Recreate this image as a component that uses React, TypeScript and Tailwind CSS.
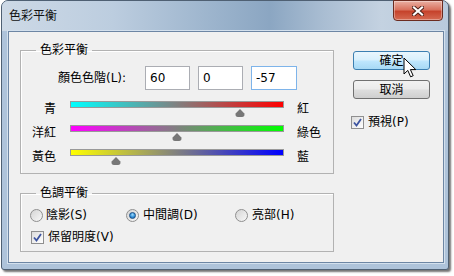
import React from "react";

type SliderRow = { left: string; right: string; value: number; bar: string };

const sliders: SliderRow[] = [
  { left: "青", right: "紅", value: 60, bar: "bg-[linear-gradient(90deg,#00ffff,#808080_50%,#ff0000)]" },
  { left: "洋紅", right: "綠色", value: 0, bar: "bg-[linear-gradient(90deg,#ff00ff,#808080_50%,#00ff00)]" },
  { left: "黃色", right: "藍", value: -57, bar: "bg-[linear-gradient(90deg,#ffff00,#808080_50%,#0000ff)]" },
];

function Thumb({ value }: { value: number }) {
  const x = ((value + 100) / 200) * 213;
  return (
    <svg
      className="absolute top-[10px]"
      style={{ left: x - 5 }}
      width="10"
      height="8"
      viewBox="0 0 10 8"
    >
      <path d="M5 0 L9.4 4.6 Q10 8 7 8 L3 8 Q0 8 0.6 4.6 Z" fill="#777777" />
    </svg>
  );
}

function CheckBox() {
  return (
    <span className="flex h-[13px] w-[13px] items-center justify-center border border-[#8f8f8f] bg-[linear-gradient(135deg,#dcdcdc,#ffffff)]">
      <svg width="9" height="9" viewBox="0 0 9 9">
        <path d="M1 4.5 L3.5 7.5 L8 1" fill="none" stroke="#3d54a0" strokeWidth="1.8" />
      </svg>
    </span>
  );
}

function Radio({ checked }: { checked?: boolean }) {
  return (
    <span className="flex h-[13px] w-[13px] items-center justify-center rounded-full border border-[#8f8f8f] bg-[linear-gradient(135deg,#d4d4d4,#f8f8f8)]">
      {checked && (
        <span className="h-[7px] w-[7px] rounded-full border border-[#1b4f86] bg-[radial-gradient(circle_at_50%_35%,#9fdcff,#2a8ad4_60%,#1b5fa5)]" />
      )}
    </span>
  );
}

export default function App() {
  return (
    <div className="relative h-[276px] w-[454px] overflow-hidden bg-white font-['DejaVu_Sans','Noto_Sans_CJK_TC',sans-serif] text-[12px] leading-[16px] text-black">
      <div className="ml-[1px] flex h-[270px] w-[448px] flex-col rounded-t-[7px] rounded-b-[3px] border border-[#4f6073] bg-[#aec3da] shadow-[2px_2px_2px_rgba(0,0,0,0.55)]">
        {/* title bar */}
        <div className="flex h-[30px] items-start justify-between rounded-t-[6px] bg-[linear-gradient(90deg,#cdd9e6_0%,#bccddf_25%,#9bb3cc_48%,#8ba6c2_60%,#a9bdd2_72%,#c4d2e1_85%,#b8c9dc_100%)]">
          <span className="ml-[7px] mt-[7px] text-[#111]">色彩平衡</span>
          <div className="-mt-[1px] mr-[5px] flex h-[21px] w-[50px] items-center justify-center rounded-b-[4px] border border-[#6b2b20] bg-[linear-gradient(180deg,#eab0a3_0%,#d9735f_45%,#c6432c_55%,#d56a52_100%)] shadow-[inset_0_0_0_1px_rgba(255,255,255,0.35)]">
            <svg width="12" height="10" viewBox="0 0 12 10">
              <path d="M2 1.5 L10 8.5 M10 1.5 L2 8.5" stroke="#4a1e16" strokeWidth="4" strokeLinecap="square" />
              <path d="M2 1.5 L10 8.5 M10 1.5 L2 8.5" stroke="#ffffff" strokeWidth="2.2" strokeLinecap="square" />
            </svg>
          </div>
        </div>

        {/* client */}
        <div className="mb-[6px] ml-[6px] mr-[4px] flex flex-1 border border-[#6d86a4] bg-[#f0f0f0] shadow-[0_0_0_1px_#d3e0ed]">
          <div className="ml-[11px] mt-[10px] flex flex-col">
            <fieldset className="h-[132px] w-[314px] border border-[#b2b2b2] shadow-[inset_1px_1px_0_#ffffff]">
              <legend className="ml-[15px] px-[4px]">色彩平衡</legend>
              <div className="mt-[8px] flex h-[24px] items-center">
                <span className="w-[124px] whitespace-nowrap pl-[37px]">顏色色階(L):</span>
                <input
                  readOnly
                  value="60"
                  className="h-[24px] w-[45px] border border-[#abadb3] bg-white px-[4px] text-[12px] outline-none"
                />
                <input
                  readOnly
                  value="0"
                  className="ml-[8px] h-[24px] w-[45px] border border-[#abadb3] bg-white px-[4px] text-[12px] outline-none"
                />
                <input
                  readOnly
                  value="-57"
                  className="ml-[8px] h-[24px] w-[46px] border border-[#7eb4ea] bg-white px-[4px] text-[12px] outline-none"
                />
              </div>
              <div className="mt-[9px] flex flex-col">
                {sliders.map((s) => (
                  <div key={s.left} className="flex h-[24px] items-start">
                    <span className="mt-[2px] w-[35px] text-right">{s.left}</span>
                    <div className="relative ml-[14px] h-full w-[214px]">
                      <div className={`mt-[2px] h-[7px] border border-[#999999] ${s.bar}`} />
                      <Thumb value={s.value} />
                    </div>
                    <span className="ml-[13px] mt-[2px]">{s.right}</span>
                  </div>
                ))}
              </div>
            </fieldset>

            <fieldset className="mt-[11px] h-[67px] w-[314px] border border-[#b2b2b2] shadow-[inset_1px_1px_0_#ffffff]">
              <legend className="ml-[15px] px-[4px]">色調平衡</legend>
              <div className="mt-[6px] flex h-[16px] items-center pl-[9px]">
                <label className="flex w-[96px] items-center">
                  <Radio />
                  <span className="ml-[3px]">陰影(S)</span>
                </label>
                <label className="flex w-[109px] items-center">
                  <Radio checked />
                  <span className="ml-[4px]">中間調(D)</span>
                </label>
                <label className="flex items-center">
                  <Radio />
                  <span className="ml-[4px]">亮部(H)</span>
                </label>
              </div>
              <div className="mt-[6px] flex h-[16px] items-center pl-[10px]">
                <CheckBox />
                <span className="ml-[4px]">保留明度(V)</span>
              </div>
            </fieldset>
          </div>

          <div className="ml-[17px] mt-[19px] flex flex-col">
            <button className="relative ml-[2px] h-[19px] w-[77px] rounded-[3px] border border-[#3c7fb1] bg-[linear-gradient(180deg,#eaf6fd_0%,#d9f0fc_45%,#bee6fd_55%,#a7d9f5_100%)] leading-[16px]">
              確定
            </button>
            <button className="ml-[2px] mt-[10px] h-[19px] w-[77px] rounded-[3px] border border-[#707070] bg-[linear-gradient(180deg,#f2f2f2_0%,#ebebeb_45%,#dddddd_55%,#cfcfcf_100%)] leading-[16px]">
              取消
            </button>
            <div className="mt-[15px] flex h-[16px] items-center">
              <CheckBox />
              <span className="ml-[4px]">預視(P)</span>
            </div>
          </div>
        </div>
      </div>

      {/* mouse pointer */}
      <svg className="absolute left-[403px] top-[57px]" width="15" height="22" viewBox="0 0 15 22">
        <path
          d="M1 1 L1 17 L4.8 13.4 L7.6 19.8 L10.2 18.7 L7.4 12.6 L12.8 12.6 Z"
          fill="#ffffff"
          stroke="#000000"
          strokeWidth="1"
          strokeLinejoin="round"
        />
      </svg>
    </div>
  );
}
